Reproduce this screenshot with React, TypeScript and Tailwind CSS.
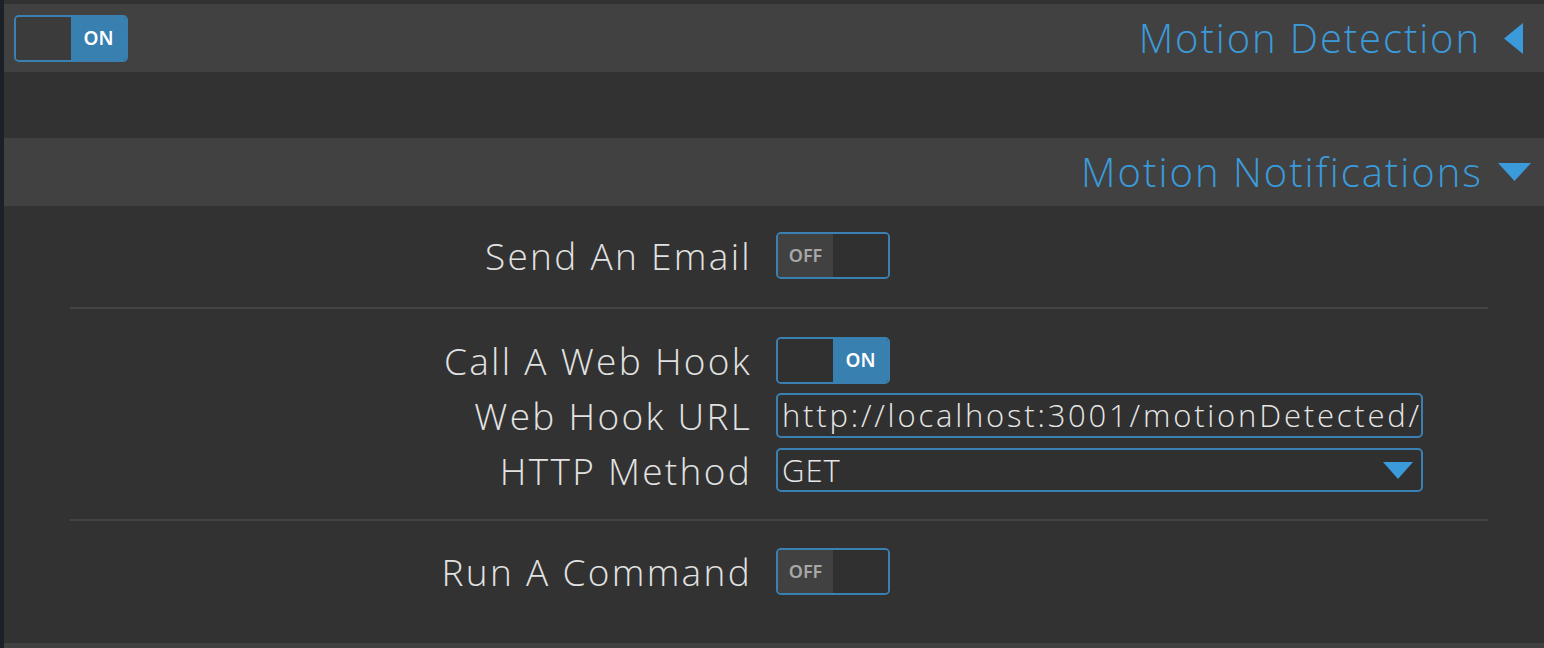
import React from "react";

function Toggle({ on, dark }: { on: boolean; dark?: boolean }) {
  return (
    <div className="flex h-[47px] w-[114px] shrink-0 overflow-hidden rounded-[5px] border-2 border-[#3a80b2]">
      {on ? (
        <>
          <div className={dark ? "w-1/2 bg-[#3b3b3b]" : "w-1/2 bg-[#303030]"} />
          <div className="flex w-1/2 items-center justify-center bg-[#3880b0] text-[19px] font-semibold text-white" style={{ fontFamily: "'Noto Sans', sans-serif" }}>
            ON
          </div>
        </>
      ) : (
        <>
          <div className="flex w-1/2 items-center justify-center bg-[#414141] text-[18px] font-semibold text-[#a8a8a8]" style={{ fontFamily: "'Noto Sans', sans-serif" }}>
            OFF
          </div>
          <div className="w-1/2 bg-[#303030]" />
        </>
      )}
    </div>
  );
}

function Row({ label, children }: { label: string; children: React.ReactNode }) {
  return (
    <div className="flex items-center">
      <div className="mr-[-2px] w-[682px] text-right text-[37px] font-light leading-none tracking-[2.3px] text-[#e2e2e2]">{label}</div>
      <div className="ml-[26px] flex">{children}</div>
    </div>
  );
}

export default function App() {
  return (
    <div className="flex h-[648px] w-full bg-[#1b2126]" style={{ fontFamily: "'Open Sans', sans-serif" }}>
      <div className="ml-[4px] flex flex-1 flex-col bg-[#323232] pt-[4px]">
        <div className="flex h-[68px] items-center justify-between bg-[#414141] pl-[10px] pr-[21px]">
          <Toggle on dark />
          <div className="flex items-center">
            <span className="mr-[-2px] text-[40px] font-light leading-none tracking-[1.9px] text-[#3b9ada]">Motion Detection</span>
            <svg width="19" height="31" viewBox="0 0 19 31" className="ml-[25px]">
              <polygon points="19,0 19,31 0,15.5" fill="#3b9ada" />
            </svg>
          </div>
        </div>
        <div className="h-[66px]" />
        <div className="flex h-[68px] items-center justify-end bg-[#414141] pr-[13px]">
          <span className="mr-[-2px] text-[40px] font-light leading-none tracking-[2px] text-[#3b9ada]">Motion Notifications</span>
          <svg width="33" height="18" viewBox="0 0 33 18" className="ml-[17px]">
            <polygon points="0,0 33,0 16.5,18" fill="#3b9ada" />
          </svg>
        </div>
        <div className="ml-[66px] mr-[56px] flex flex-1 flex-col">
          <div className="pb-[28px] pt-[26px]">
            <Row label="Send An Email">
              <Toggle on={false} />
            </Row>
          </div>
          <div className="h-[2px] bg-[#444444]" />
          <div className="flex flex-col pb-[27px] pt-[28px]">
            <Row label="Call A Web Hook">
              <Toggle on />
            </Row>
            <div className="mt-[9px]">
              <Row label="Web Hook URL">
                <div className="flex h-[45px] w-[647px] items-center overflow-hidden whitespace-nowrap rounded-[5px] border-2 border-[#3a80b2] bg-[#303030] pl-[4px] text-[31px] font-light leading-none tracking-[2.8px] text-[#e6e6e6]">
                  http://localhost:3001/motionDetected/
                </div>
              </Row>
            </div>
            <div className="mt-[10px]">
              <Row label="HTTP Method">
                <div className="flex h-[44px] w-[647px] items-center justify-between rounded-[5px] border-2 border-[#3a80b2] bg-[#303030] pl-[4px] pr-[8px] text-[31px] font-light leading-none tracking-[1px] text-[#e6e6e6]">
                  <span>GET</span>
                  <svg width="30" height="17" viewBox="0 0 30 17">
                    <polygon points="0,0 30,0 15,17" fill="#3b9ada" />
                  </svg>
                </div>
              </Row>
            </div>
          </div>
          <div className="h-[2px] bg-[#444444]" />
          <div className="pt-[27px]">
            <Row label="Run A Command">
              <Toggle on={false} />
            </Row>
          </div>
        </div>
        <div className="h-[5px] bg-[#414141]" />
      </div>
    </div>
  );
}
